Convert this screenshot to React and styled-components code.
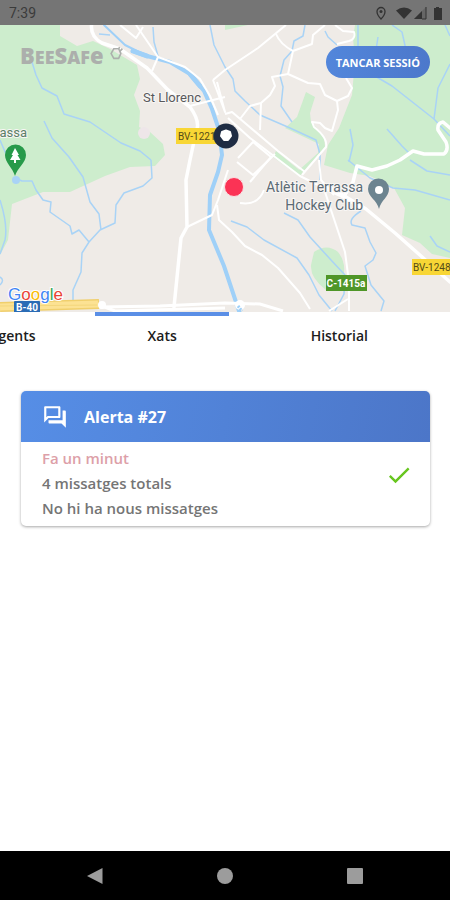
import React, { Component } from 'react'
import styled, { createGlobalStyle } from 'styled-components'

const tabs = [
  { id: 'agents', name: 'Agents' },
  { id: 'xats', name: 'Xats' },
  { id: 'historial', name: 'Historial' }
]

const chats = [
  { id: 27, time: 'Fa un minut', total: 4, unread: 0 }
]

const streams = [
  'M32 62 L36 75 L42 88 L57 96 L64 114 L90 122 L121 143 L140 151 L151 160',
  'M44 121 L52 138 L69 157 L83 177 L90 202 L99 214 L101 230',
  'M15 178 L22 181 L32 181 L36 190 L43 200 L51 202 L50 212 L70 226 L72 234 L79 230 L89 242',
  'M151 160 L152 178 L143 186 L124 193 L116 205 L115 223 L100 230 L89 242 L82 253 L81 272 L73 290 L73 301',
  'M0 200 Q8 225 5 240 L0 254',
  'M0 277 Q5 280 0 285',
  'M0 140 L12 168',
  'M153 27 L154 42 L158 56',
  'M99 34 L110 35',
  'M210 25 L214 45 L225 67 L233 79 L235 91 L245 101 L260 115 L290 128 L316 140 L320 154 L320 180',
  'M305 25 L303 36 L294 41 L292 51 L284 60 L280 76 L283 87 L281 106 L292 122',
  'M325 31 L328 37 L337 45',
  'M358 25 L358 50',
  'M378 37 L376 50',
  'M375 76 L392 86 L420 108 L434 119 L438 88 L450 64',
  'M392 25 L402 32 L406 50',
  'M445 25 L450 36',
  'M434 119 L450 136',
  'M350 129 L353 145 L349 162',
  'M387 129 L402 146 L410 154',
  'M348 160 L370 178 L393 188 L415 190 L450 200',
  'M410 160 L427 171 L450 175',
  'M430 236 L437 246 L450 252',
  'M231 221 L247 227 L264 240 L297 258 L309 275 L319 295 L332 311',
  'M284 213 L298 220 L310 237 L331 260 L345 275 L344 294 L335 311',
  'M361 211 Q348 219 352 225 L365 228 L370 242 L376 253 L373 260 L365 266 L371 285 L384 301 L381 311'
]

const roads = [
  'M120 25 L136 38 L143 27',
  'M136 25 L147 41 L158 57 L152 71',
  'M190 106 L213 100 L225 97',
  'M213 80 L225 70 L258 48 L286 25',
  'M276 34 Q280 44 293 51 L312 44 L313 35 L325 25',
  'M335 25 L343 31 L354 32 Q356 39 349 41 L337 44',
  'M293 51 L288 74 L272 77 L275 86 L270 95 L261 103 L250 106 L240 119',
  'M288 74 L308 83 L320 84 L325 95 L337 101 L348 96 L352 88 L346 78',
  'M337 101 L338 110 L332 131 L325 128 L320 123 L312 122 L314 127 Q328 138 326 147 L302 175',
  'M261 103 L260 130',
  'M213 80 L219 96 L225 112 L217 82',
  'M225 114 L232 112 L278 151 L305 172',
  'M228 118 L250 138 L300 176 L340 196',
  'M238 158 L253 142 L271 157 L250 182',
  'M237 162 L253 175 L275 154',
  'M187 227 L212 215 L218 200 L228 170',
  'M217 205 L219 220 L232 232 L245 246 L262 255 L278 268 L300 293 L310 309',
  'M240 203 Q258 206 264 190',
  'M319 160 L321 180 L334 195',
  'M322 183 L333 216 L345 252 L349 282 L349 311',
  'M329 311 L348 299',
  'M340 196 L360 208'
]

class MapView extends Component {
  render() {
    return (
      <MapSvg viewBox="0 25 450 287" preserveAspectRatio="xMidYMid slice" role="img" aria-label="Mapa">
        <rect x="0" y="25" width="450" height="287" fill="#efebe7" />
        {/* parks */}
        <g fill="#cdedcd">
          <path d="M0 25 H60 V36 L77 46 L93 41 L110 49 L137 65 L140 79 L134 95 L140 111 L139 127 L150 132 L163 144 L165 155 L155 166 L130 167 L105 176 L70 192 L43 192 L12 204 L8 240 L0 255 Z" />
          <path d="M355 25 L353 38 L355 60 L352 95 L339 128 L328 145 L324 165 L350 173 L370 176 L394 188 L405 208 L402 235 L420 243 L432 254 L450 258 V25 Z" />
          <path d="M306 92 L315 97 L310 113 L311 122 L324 136 L325 147 L302 173 L298 171 L318 153 L319 144 L285 128 L297 117 Z" />
          <path d="M276 151 L303 173 L299 176 L273 157 Z" />
          <path d="M314 252 Q327 243 338 252 Q348 265 342 280 L326 290 Q310 278 311 265 Z" />
          <path d="M225 25 H248 L225 30 Z" />
          <path d="M430 25 H450 V30 Z" />
        </g>
        <circle cx="144" cy="133" r="6" fill="#eee6e9" />
        <g fill="none" stroke="#a9d3f6" strokeWidth="1.5" strokeLinejoin="round">
          {streams.map(d => <path key={d} d={d} />)}
        </g>
        <g fill="none" stroke="#9fd0f8" strokeLinecap="round" strokeLinejoin="round">
          <path d="M104 25 L125 45 L147 56" strokeWidth="2" />
          <path d="M133 51 L147 56 L170 62 L190 74 L204 91 L212 109 L219 130 L222 155 L218 172 L210 195 L209 230 L224 266 L239 311" strokeWidth="4" />
          <path d="M133 51 L147 56 M190 74 L200 86" strokeWidth="5" />
        </g>
        <g fill="none" stroke="#fff" strokeWidth="2" strokeLinejoin="round">
          {roads.map(d => <path key={d} d={d} />)}
          <path d="M158 57 L185 67 L200 79 L210 96 L218 115" />
        </g>
        <g fill="none" stroke="#fff" strokeWidth="3.5" strokeLinecap="round" strokeLinejoin="round">
          <path d="M92 22 Q89 36 102 43 L120 49 L147 68 L168 90 L190 107 Q201 122 196 132 L190 160 L186 180 L187 227 L181 238 L174 307" />
          <path d="M344 196 L353 182 L357 166 L372 170 L387 166 L400 160 L413 151 L424 154 L444 154 Q449 150 446 142 L438 130 Q437 123 443 122 L450 128" />
          <path d="M331 188 L366 209 L395 233 L421 256 L450 282" />
        </g>
        {/* motorway */}
        <g fill="none">
          <path d="M100 307 L160 306 L225 303 L260 304 L283 311" stroke="#fff" strokeWidth="3" />
          <path d="M102 306 L115 311 L225 308" stroke="#fff" strokeWidth="3" />
          <path d="M0 307 L99 304" stroke="#f0cf6c" strokeWidth="10" />
          <path d="M0 307 L98 304" stroke="#fce293" strokeWidth="7" />
          <path d="M0 306 L97 305" stroke="#f3d67c" />
          <circle cx="102" cy="305" r="4" fill="#fff" />
          <circle cx="240" cy="305" r="5" fill="#fff" />
          <path d="M238 306 L242 311" stroke="#9fd0f8" strokeWidth="3" strokeDasharray="2 1" />
        </g>

        <rect x="14" y="301" width="26" height="12" rx="1" fill="#2b6cb5" />
        <MapText x="27" y="311" $size={10} $bold $color="#fff" textAnchor="middle">B-40</MapText>
        <rect x="176" y="128" width="42" height="16" fill="#f8d635" />
        <MapText x="178" y="140" $size={10} $color="#544b18">BV-1221</MapText>
        <rect x="412" y="259" width="38" height="16" fill="#f8d635" />
        <MapText x="413" y="271" $size={10} $color="#544b18">BV-1248</MapText>
        <rect x="326" y="275" width="41" height="16" fill="#4f9628" />
        <MapText x="346" y="287" $size={10} $bold $color="#fff" textAnchor="middle">C-1415a</MapText>

        <MapText x="143" y="102" $size={13} $color="#59595b" $halo>St Llorenc</MapText>
        <MapText x="27" y="137" $size={13} $color="#5c8067" $halo textAnchor="end">Terrassa</MapText>
        <MapText x="363" y="192" $size={14} $color="#5c6b75" $halo textAnchor="end">Atlètic Terrassa</MapText>
        <MapText x="363" y="210" $size={14} $color="#5c6b75" $halo textAnchor="end">Hockey Club</MapText>

        {/* park pin */}
        <circle cx="16" cy="180" r="4" fill="#a9d3f6" />
        <path d="M15 176 C13 168 5 163 5 155 A10 10 0 0 1 26 155 C26 163 17 168 15 176 Z" fill="#279a4a" />
        <path d="M15 148 L19 155 H17.500 L20.500 160 H16 V163 H14 V160 H10 L13 155 H11.500 Z" fill="#fff" />
        {/* club pin */}
        <path d="M379 209 C377 200 368 197 368 189 A10.500 10.500 0 0 1 389 189 C389 197 381 200 379 209 Z" fill="#6c8490" />
        <circle cx="379" cy="190" r="4" fill="#fff" />
        {/* agent marker and own position */}
        <circle cx="226" cy="136" r="12.500" fill="#1e2c43" />
        <path d="M222 132 L226 130.500 L230 132 L231 136 L228 140 H224 L221 136 Z" fill="#fff" stroke="#fff" strokeWidth="2" strokeLinejoin="round" />
        <circle cx="234" cy="187" r="9.500" fill="#fb3355" stroke="#fbdfe2" />

        <GoogleText x="8" y="300">
          <tspan fill="#4285f4">G</tspan>
          <tspan fill="#ea4335">o</tspan>
          <tspan fill="#fbbc05">o</tspan>
          <tspan fill="#4285f4">g</tspan>
          <tspan fill="#34a853">l</tspan>
          <tspan fill="#ea4335">e</tspan>
        </GoogleText>
      </MapSvg>
    )
  }
}

const ChatCard = ({ chat }) => (
  <Card>
    <CardHeader>
      <svg width="26" height="26" viewBox="0 0 24 24" fill="currentColor" aria-hidden="true">
        <path d="M15 4v7H5.170L4 12.170V4h11m1-2H3c-.55 0-1 .45-1 1v14l4-4h10c.55 0 1-.45 1-1V3c0-.55-.45-1-1-1zm5 4h-2v9H6v2c0 .55.45 1 1 1h11l4 4V7c0-.55-.45-1-1-1z" />
      </svg>
      <CardTitle>Alerta #{chat.id}</CardTitle>
    </CardHeader>
    <CardBody>
      <div>
        <CardLine $time>{chat.time}</CardLine>
        <CardLine>{chat.total} missatges totals</CardLine>
        <CardLine>{chat.unread ? 'Hi ha nous missatges' : 'No hi ha nous missatges'}</CardLine>
      </div>
      <svg width="28" height="28" viewBox="0 0 24 24" fill="#68c620" role="img" aria-label="Llegit">
        <path d="M9 16.170L4.830 12l-1.420 1.410L9 19 21 7l-1.410-1.410z" />
      </svg>
    </CardBody>
  </Card>
)

export default class App extends Component {
  constructor(props) {
    super(props)
    this.state = {
      active: 'xats'
    }
  }
  changeTab = (id) => {
    this.setState({ active: id })
  }
  render() {
    const { active } = this.state
    return (
      <Page>
        <GlobalStyle />
        <StatusBar>
          <span>7:39</span>
          <StatusIcons viewBox="0 0 68 16" aria-hidden="true">
            <path d="M6 2.500 A4 4 0 0 1 10 6.500 Q10 10 6 14 Q2 10 2 6.500 A4 4 0 0 1 6 2.500 Z" fill="none" stroke="#333" strokeWidth="1.300" />
            <circle cx="6" cy="6.500" r="1.500" />
            <path d="M21 5.500 Q29 -.5 37 5.500 L29 14 Z" />
            <path d="M51 2 V14 H39 Z" fill="#666" />
            <path d="M47 6 V14 H39 Z" />
            <path d="M51 2 V14 H47" fill="none" stroke="#333" />
            <path d="M61 2 H64 V3 H67 V15 H59 V3 H61 Z" />
          </StatusIcons>
        </StatusBar>
        <MapArea>
          <MapView />
          <MapHeader>
            <Logo>
              <b>B<small>EE</small>S<small>AF</small>e</b>
              <svg width="13" height="14" viewBox="0 0 12 13" fill="none" stroke="currentColor" strokeWidth="1.500" aria-hidden="true">
                <path d="M3.500 2.500 L8 2.500 L10 7 L8 11.500 H3.500 L1 7 Z M8 2.500 L9 1 M9.500 4.500 L11.500 2.500" />
              </svg>
            </Logo>
            <LogoutButton type="button">TANCAR SESSIÓ</LogoutButton>
          </MapHeader>
        </MapArea>
        <TabBar>
          <TabStrip>
            {tabs.map((tab, i) => (
              <Tab key={tab.id} type="button" $first={i === 0} $active={tab.id === active} onClick={() => { this.changeTab(tab.id) }}>
                {tab.name}
              </Tab>
            ))}
          </TabStrip>
        </TabBar>
        <ChatList>
          {active === 'xats' && chats.map(chat => <ChatCard key={chat.id} chat={chat} />)}
        </ChatList>
        <NavBar>
          <NavButton type="button" aria-label="Enrere">
            <svg width="18" height="18" viewBox="0 0 18 18"><path d="M1 9 L16.500 1 V17 Z" /></svg>
          </NavButton>
          <NavButton type="button" aria-label="Inici">
            <svg width="18" height="18" viewBox="0 0 18 18"><circle cx="9" cy="9" r="8" /></svg>
          </NavButton>
          <NavButton type="button" aria-label="Recents">
            <svg width="18" height="18" viewBox="0 0 18 18"><rect x="1" y="1" width="16" height="16" rx="1" /></svg>
          </NavButton>
        </NavBar>
      </Page>
    )
  }
}

const GlobalStyle = createGlobalStyle`
* {
  box-sizing: border-box;
}

body {
  margin: 0;
  background: #fff;
  font-family: Muli, 'Open Sans', sans-serif;
}

button {
  border: none;
  padding: 0;
  background: none;
  font-family: inherit;
}
`

const Page = styled.div`
  display: flex;
  flex-direction: column;
  min-height: 100vh;
  overflow: hidden;
`

const StatusBar = styled.header`
  display: flex;
  align-items: center;
  justify-content: space-between;
  height: 25px;
  padding: 0 7px 0 9px;
  background: #757575;
  color: #3b3b3b;
  font: 14px Roboto, sans-serif;
`

const StatusIcons = styled.svg`
  width: 68px;
  height: 16px;
  fill: #333;
`

const MapArea = styled.section`
  position: relative;
  height: 287px;
`

const MapSvg = styled.svg`
  display: block;
  width: 100%;
  height: 100%;
`

const MapText = styled.text`
  font-family: Roboto, sans-serif;
  font-size: ${props => props.$size}px;
  font-weight: ${props => props.$bold ? 700 : 400};
  fill: ${props => props.$color};
  stroke: ${props => props.$halo ? '#f8f6f4' : 'none'};
  stroke-width: 2px;
  paint-order: stroke;
`

const GoogleText = styled.text`
  font-family: 'Liberation Sans', Arial, sans-serif;
  font-size: 17px;
  stroke: #fff;
  stroke-width: 2px;
  paint-order: stroke;
`

// floats over the map
const MapHeader = styled.div`
  position: absolute;
  top: 0;
  left: 0;
  right: 0;
  display: flex;
  align-items: flex-start;
  justify-content: space-between;
  padding: 21px 20px 0;
`

const Logo = styled.div`
  display: flex;
  align-items: flex-start;
  color: #acafac;

  b {
    font-size: 22px;
    line-height: 18px;
    font-weight: 800;
  }

  small {
    font-size: 18px;
  }

  svg {
    margin-left: 6px;
  }
`

const LogoutButton = styled.button`
  height: 32px;
  padding: 0 10px;
  border-radius: 16px;
  background: linear-gradient(90deg, #5286db, #4c78cb);
  color: #fff;
  font-size: 11px;
  font-weight: 700;
`

const TabBar = styled.nav`
  overflow: hidden;
`

const TabStrip = styled.div`
  display: flex;
  margin-left: -23%;
`

const Tab = styled.button`
  display: flex;
  flex-direction: column;
  flex: 0 0 32%;
  align-items: ${props => props.$first ? 'flex-end' : 'center'};
  height: 48px;
  padding-right: ${props => props.$first ? '38px' : '0'};
  color: #1c1c1c;
  font-size: 14px;
  line-height: 20px;
  font-weight: 600;

  &::before {
    content: '';
    width: 76%;
    height: 4px;
    margin-bottom: 10px;
    background: ${props => props.$active ? '#5b8fe6' : 'transparent'};
  }
`

const ChatList = styled.main`
  flex: 1;
  padding: 31px 20px 20px 21px;
`

const Card = styled.article`
  overflow: hidden;
  border-radius: 5px;
  background: #fff;
  box-shadow: 0 1px 3px rgba(0, 0, 0, .35);
`

const CardHeader = styled.div`
  display: flex;
  align-items: center;
  gap: 16px;
  height: 51px;
  padding: 0 21px;
  background: linear-gradient(100deg, #568ee6, #4c76c8);
  color: #fff;
`

const CardTitle = styled.h2`
  margin: 0;
  font-size: 16px;
  font-weight: 700;
`

const CardBody = styled.div`
  display: flex;
  align-items: center;
  justify-content: space-between;
  padding: 4px 17px 5px 21px;

  svg {
    margin-bottom: 18px;
  }
`

const CardLine = styled.p`
  margin: 0;
  line-height: 25px;
  font-size: 15px;
  font-weight: 600;
  color: ${props => props.$time ? '#dda0a8' : '#757575'};
`

const NavBar = styled.footer`
  display: flex;
  justify-content: space-between;
  height: 49px;
  padding: 0 80px;
  background: #000;
`

const NavButton = styled.button`
  display: flex;
  align-items: center;
  justify-content: center;
  width: 30px;
  fill: #9c9c9c;
`
